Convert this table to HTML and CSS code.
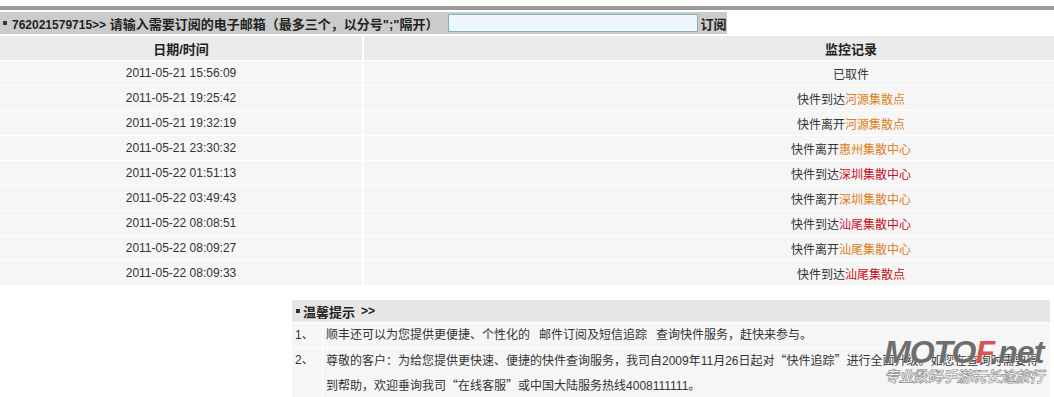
FILE: index.html
```html
<!DOCTYPE html>
<html lang="zh-CN">
<head>
<meta charset="utf-8">
<title>快件查询</title>
<link rel="stylesheet" href="styles.css">
</head>
<body>
<div class="page">
  <div class="topline"></div>
  <div class="subbar">
    <span class="dot"></span>
    <span class="subtext"><span class="num">762021579715&gt;&gt;</span> 请输入需要订阅的电子邮箱（最多三个，以分号";"隔开）</span>
    <input class="email" type="text">
    <span class="subbtn">订阅</span>
  </div>
  <table class="track">
    <thead>
      <tr><th class="c1">日期/时间</th><th class="c2">监控记录</th></tr>
    </thead>
    <tbody>
      <tr><td>2011-05-21 15:56:09</td><td>已取件</td></tr>
      <tr><td>2011-05-21 19:25:42</td><td>快件到达<span class="o">河源集散点</span></td></tr>
      <tr><td>2011-05-21 19:32:19</td><td>快件离开<span class="o">河源集散点</span></td></tr>
      <tr><td>2011-05-21 23:30:32</td><td>快件离开<span class="o">惠州集散中心</span></td></tr>
      <tr><td>2011-05-22 01:51:13</td><td>快件到达<span class="r">深圳集散中心</span></td></tr>
      <tr><td>2011-05-22 03:49:43</td><td>快件离开<span class="o">深圳集散中心</span></td></tr>
      <tr><td>2011-05-22 08:08:51</td><td>快件到达<span class="r">汕尾集散中心</span></td></tr>
      <tr><td>2011-05-22 08:09:27</td><td>快件离开<span class="o">汕尾集散中心</span></td></tr>
      <tr><td>2011-05-22 08:09:33</td><td>快件到达<span class="r">汕尾集散点</span></td></tr>
    </tbody>
  </table>
  <div class="tips">
    <div class="tips-title"><span class="dot"></span>温馨提示 <span class="arr">&gt;&gt;</span></div>
    <div class="tips-no">1、</div>
    <div class="tips-text">顺丰还可以为您提供更便捷、个性化的<span class="sp"> </span>邮件订阅及短信追踪<span class="sp"> </span>查询快件服务，赶快来参与。</div>
    <div class="tips-no">2、</div>
    <div class="tips-text">尊敬的客户：为给您提供更快速、便捷的快件查询服务，我司自2009年11月26日起对<span class="q">“</span>快件追踪<span class="q">”</span>进行全面升级。如您在查询时需要得<br>到帮助，欢迎垂询我司<span class="q">“</span>在线客服<span class="q">”</span>或中国大陆服务热线4008111111。</div>
  </div>
</div>
<div class="watermark">
  <div class="wm-main">MOTO<span class="wm-f">F</span>.net</div>
  <div class="wm-sub">专业数码手游玩长途旅行</div>
</div>
</body>
</html>
```

FILE: styles.css
```css
html, body {
  margin: 0;
  padding: 0;
  overflow: hidden;
  background: #fff;
}
body {
  font-family: "Liberation Sans", "Noto Sans CJK SC", sans-serif;
  font-size: 12px;
  color: #333;
  width: 1054px;
  height: 397px;
  position: relative;
  text-spacing-trim: space-all;
}
.page {
  width: 1342px;
}
.topline {
  margin-top: 6px;
  height: 4px;
  background: #9a9a9a;
}
.subbar {
  margin-top: 2px;
  width: 727px;
  height: 22px;
  background: #cbcbcb;
  display: flex;
  align-items: center;
  font-weight: bold;
  font-size: 13px;
  color: #222;
  white-space: nowrap;
}
.dot {
  display: inline-block;
  width: 4px;
  height: 4px;
  background: #333;
  margin: 0 5px 0 3px;
}
.num {
  font-size: 12px;
}
.email {
  box-sizing: border-box;
  width: 250px;
  height: 18px;
  margin: 0 2px 0 10px;
  border: 1px solid #7fb1c1;
  background: #f0f7fc;
  padding: 0;
}
.subbtn {
  font-size: 13px;
}
.track {
  margin-top: 1px;
  width: 1342px;
  border-collapse: separate;
  border-spacing: 2px 1px;
  margin-left: -2px;
  table-layout: fixed;
}
.track th, .track td {
  height: 24px;
  padding: 0;
  text-align: center;
  vertical-align: middle;
}
.track th {
  background: #ebebeb;
  font-weight: bold;
  font-size: 13px;
  color: #222;
}
.track .c1 { width: 362px; }
.track td {
  background: #f6f6f6;
  color: #333;
}
.o { color: #dd8018; }
.r { color: #c8101c; }
.tips {
  width: 758px;
  margin: 14px 0 0 292px;
  display: grid;
  grid-template-columns: 30px 1fr;
  gap: 1px;
  background: #fff;
}
.tips-title {
  grid-column: 1 / 3;
  height: 22px;
  background: #e6e6e6;
  display: flex;
  align-items: center;
  font-weight: bold;
  font-size: 13px;
  color: #222;
}
.tips-title .dot { margin: 0 3px 0 4px; }
.tips-title .arr { margin-left: 6px; font-size: 12px; }
.tips-no, .tips-text {
  background: #f6f6f6;
  line-height: 24px;
}
.tips-no { padding-left: 3px; }
.tips-text { padding-left: 3px; white-space: nowrap; }
.sp {
  display: inline-block;
  width: 9px;
}
.q {
  font-family: "Noto Sans CJK SC", sans-serif;
  display: inline-block;
  width: 12px;
  text-align: center;
}
.watermark {
  position: absolute;
  left: 884px;
  top: 338px;
  width: 168px;
  pointer-events: none;
}
.wm-main {
  font-family: "Liberation Sans", sans-serif;
  font-weight: bold;
  font-style: italic;
  font-size: 32px;
  line-height: 29px;
  color: #6e6e6e;
  letter-spacing: -1px;
  text-shadow: 0 0 1px #fff;
}
.wm-f { color: #d9534f; }
.wm-sub {
  font-family: "Noto Sans CJK SC", sans-serif;
  font-style: italic;
  font-weight: bold;
  font-size: 15px;
  line-height: 18px;
  color: #f4f4f4;
  -webkit-text-stroke: 0.6px #8a8a8a;
  letter-spacing: -0.5px;
}
```
